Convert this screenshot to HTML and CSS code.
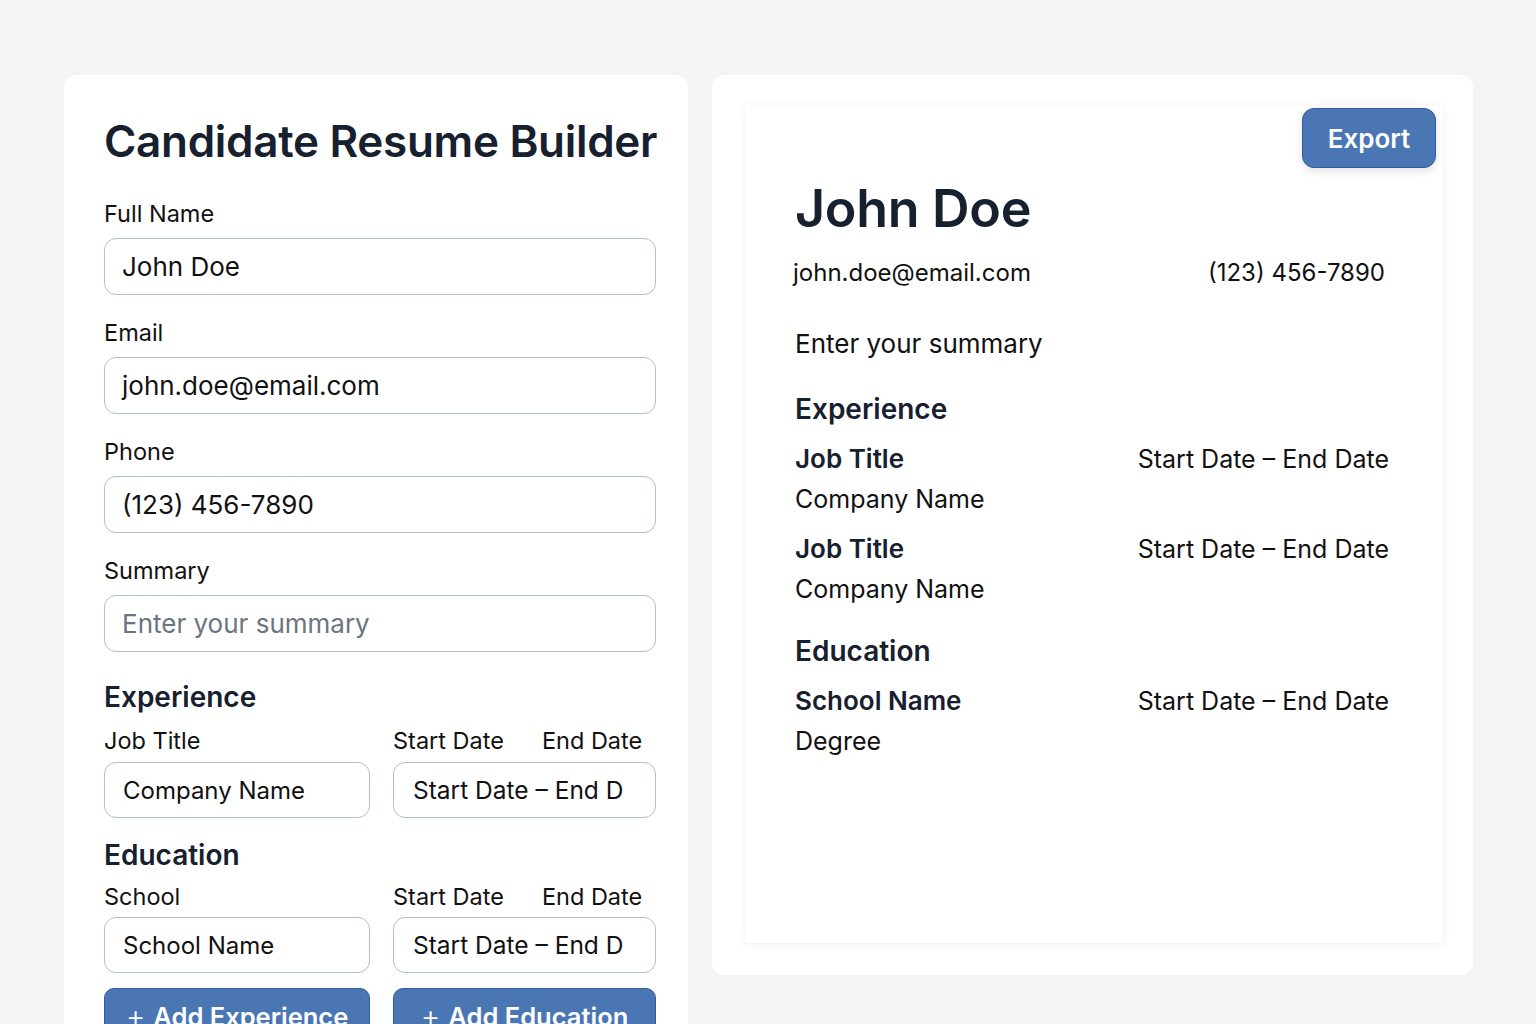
FILE: index.html
```html
<!DOCTYPE html>
<html lang="en">
<head>
<meta charset="utf-8">
<title>Candidate Resume Builder</title>
<link rel="stylesheet" href="styles.css">
</head>
<body>
<div class="page">
  <section class="editor">
    <h1 class="title">Candidate Resume Builder</h1>

    <div class="field">
      <label class="label">Full Name</label>
      <div class="input">John Doe</div>
    </div>
    <div class="field">
      <label class="label">Email</label>
      <div class="input">john.doe@email.com</div>
    </div>
    <div class="field">
      <label class="label">Phone</label>
      <div class="input">(123) 456-7890</div>
    </div>
    <div class="field">
      <label class="label">Summary</label>
      <div class="input placeholder">Enter your summary</div>
    </div>

    <h2 class="section exp">Experience</h2>
    <div class="pair">
      <div class="col">
        <div class="label">Job Title</div>
        <div class="input small">Company Name</div>
      </div>
      <div class="col">
        <div class="label dates"><span>Start Date</span><span>End Date</span></div>
        <div class="input small dateinput">Start Date – End D</div>
      </div>
    </div>

    <h2 class="section edu">Education</h2>
    <div class="pair">
      <div class="col">
        <div class="label">School</div>
        <div class="input small">School Name</div>
      </div>
      <div class="col">
        <div class="label dates"><span>Start Date</span><span>End Date</span></div>
        <div class="input small dateinput">Start Date – End D</div>
      </div>
    </div>

    <div class="pair buttons">
      <button class="btn"><span class="plus">+</span> Add Experience</button>
      <button class="btn"><span class="plus">+</span> Add Education</button>
    </div>
  </section>

  <section class="preview">
    <div class="paper">
      <button class="export">Export</button>
      <h1 class="name">John Doe</h1>
      <div class="contact"><span>john.doe@email.com</span><span>(123) 456-7890</span></div>
      <p class="summary">Enter your summary</p>

      <h2 class="rsection">Experience</h2>
      <div class="entry">
        <div class="row"><span class="strong">Job Title</span><span>Start Date – End Date</span></div>
        <div class="row"><span>Company Name</span></div>
      </div>
      <div class="entry">
        <div class="row"><span class="strong">Job Title</span><span>Start Date – End Date</span></div>
        <div class="row"><span>Company Name</span></div>
      </div>

      <h2 class="rsection redu">Education</h2>
      <div class="entry">
        <div class="row"><span class="strong">School Name</span><span>Start Date – End Date</span></div>
        <div class="row"><span>Degree</span></div>
      </div>
    </div>
  </section>
</div>
</body>
</html>
```

FILE: styles.css
```css
* { box-sizing: border-box; }

html, body {
  margin: 0;
  padding: 0;
  background: #f4f4f5;
  font-family: Inter, "Noto Sans", "Liberation Sans", sans-serif;
  color: #141b27;
}

.page {
  display: flex;
  align-items: flex-start;
  gap: 24px;
  padding: 75px 0 0 64px;
}

/* ---------- Left editor card ---------- */
.editor {
  width: 624px;
  background: #ffffff;
  border-radius: 12px;
  padding: 38px 32px 60px 40px;
}

.title {
  margin: 0 0 31px 0;
  font-size: 44px;
  line-height: 56px;
  font-weight: 600;
  letter-spacing: -0.3px;
  color: #16202e;
  white-space: nowrap;
}

.field { margin-bottom: 24px; }

.label {
  display: block;
  font-size: 23.5px;
  line-height: 28px;
  color: #111;
  margin-bottom: 10px;
}

.input {
  height: 57px;
  border: 1.5px solid #b3bdcd;
  border-radius: 12px;
  padding: 0 17px;
  display: flex;
  align-items: center;
  font-size: 26px;
  color: #111;
  background: #fff;
}

.input.placeholder { color: #6b7480; }

.input.small { height: 56px; padding-left: 18px; font-size: 24px; }
.input.dateinput { padding-left: 19px; font-size: 24.5px; }

.section {
  margin: 0;
  font-size: 28px;
  line-height: 34px;
  font-weight: 600;
  color: #16202e;
}
.section.exp { margin-top: 28px; margin-bottom: 13px; }
.section.edu { margin-top: 20px; margin-bottom: 11px; }

.pair {
  display: grid;
  grid-template-columns: 266px 263px;
  column-gap: 23px;
}

.pair .label { margin-bottom: 7px; }
.edu + .pair .label { margin-bottom: 6px; }

.dates {
  display: flex;
  gap: 38px;
}

.buttons { margin-top: 15px; }

.btn {
  height: 56px;
  border: 1.5px solid #2f5c9c;
  border-radius: 10px;
  background: #4a77b4;
  color: #fff;
  font-family: inherit;
  font-size: 25.5px;
  font-weight: 600;
  display: flex;
  align-items: center;
  justify-content: center;
  gap: 8px;
  padding: 0;
}
.plus { font-weight: 300; font-size: 30px; }

/* ---------- Right preview card ---------- */
.preview {
  width: 761px;
  height: 900px;
  background: #ffffff;
  border-radius: 12px;
  padding: 30px 30px 32px 33px;
}

.paper {
  position: relative;
  height: 100%;
  background: #ffffff;
  box-shadow: 0 1px 8px rgba(0, 0, 0, 0.07);
  padding: 73px 54px 0 50px;
}

.export {
  position: absolute;
  top: 3px;
  right: 7px;
  width: 134px;
  height: 60px;
  border: 1.5px solid #2f5c9c;
  border-radius: 12px;
  background: #4a77b4;
  color: #fff;
  font-family: inherit;
  font-size: 26px;
  font-weight: 600;
  box-shadow: 0 3px 8px rgba(0, 0, 0, 0.12);
}

.name {
  margin: 0;
  font-size: 52px;
  line-height: 62px;
  font-weight: 600;
  letter-spacing: -0.3px;
  color: #16202e;
}

.contact {
  display: flex;
  justify-content: space-between;
  margin: 18px 4px 0 -2px;
  font-size: 24px;
  line-height: 30px;
  color: #111;
}

.summary {
  margin: 40px 0 0 0;
  font-size: 26px;
  line-height: 32px;
  color: #111;
}

.rsection {
  margin: 32px 0 13px 0;
  font-size: 28px;
  line-height: 34px;
  font-weight: 600;
  color: #16202e;
}
.rsection.redu { margin-top: 25px; }

.entry { margin-bottom: 10px; }

.row {
  display: flex;
  justify-content: space-between;
  font-size: 25px;
  line-height: 40px;
  color: #111;
}

.strong {
  font-weight: 600;
  font-size: 26px;
  color: #16202e;
}
```
